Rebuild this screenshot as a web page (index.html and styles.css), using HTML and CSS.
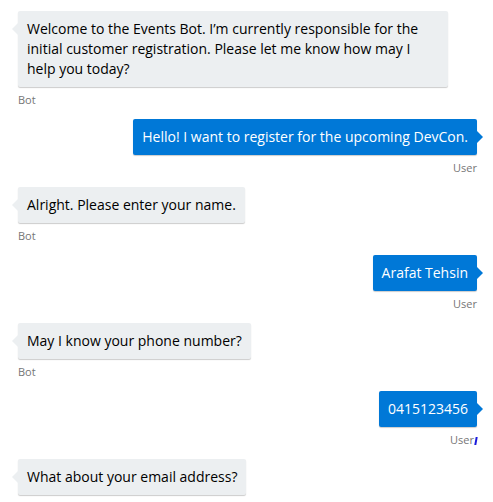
FILE: index.html
```html
<!DOCTYPE html>
<html>
<head>
<meta charset="utf-8">
<link rel="stylesheet" href="styles.css">
</head>
<body>
<div class="chat">
  <div class="msg bot">
    <div class="bubble">Welcome to the Events Bot. I’m currently responsible for the initial customer registration. Please let me know how may I help you today?</div>
    <div class="label">Bot</div>
  </div>
  <div class="msg user">
    <div class="bubble">Hello! I want to register for the upcoming DevCon.</div>
    <div class="label">User</div>
  </div>
  <div class="msg bot">
    <div class="bubble">Alright. Please enter your name.</div>
    <div class="label">Bot</div>
  </div>
  <div class="msg user">
    <div class="bubble">Arafat Tehsin</div>
    <div class="label">User</div>
  </div>
  <div class="msg bot">
    <div class="bubble">May I know your phone number?</div>
    <div class="label">Bot</div>
  </div>
  <div class="msg user">
    <div class="bubble">0415123456</div>
    <div class="label">User<span class="caret"></span></div>
  </div>
  <div class="msg bot">
    <div class="bubble">What about your email address?</div>
  </div>
</div>
</body>
</html>
```
FILE: styles.css
```css
html, body {
  margin: 0;
  padding: 0;
  background: #ffffff;
  overflow: hidden;
}
.chat {
  display: flex;
  flex-direction: column;
  padding: 11px 16px 0 18px;
  font-family: "Open Sans", "Noto Sans", sans-serif;
}
.msg {
  display: flex;
  flex-direction: column;
  margin-bottom: 12px;
}
.msg.bot { align-items: flex-start; }
.msg.user { align-items: flex-end; }
.bubble {
  position: relative;
  font-size: 14px;
  line-height: 20px;
  padding: 8px 9px;
  border-radius: 2px;
  box-shadow: 0 1px 1px rgba(0, 0, 0, 0.2);
  max-width: 412px;
}
.bot .bubble {
  background: #eceff1;
  color: #000000;
}
.user .bubble {
  background: #0078d7;
  color: #ffffff;
}
.bubble::before {
  content: "";
  position: absolute;
  top: 12px;
  width: 0;
  height: 0;
  border-top: 6px solid transparent;
  border-bottom: 6px solid transparent;
}
.bot .bubble::before {
  left: -6px;
  border-right: 6px solid #eceff1;
}
.user .bubble::before {
  right: -6px;
  border-left: 6px solid #0078d7;
}
.label {
  font-size: 11px;
  line-height: 15px;
  padding-top: 5px;
  color: #767676;
  font-family: "Open Sans", "Noto Sans", sans-serif;
}
.caret {
  display: inline-block;
  width: 2px;
  height: 8px;
  background: #1a1adc;
  margin-left: 1px;
  transform: skewX(-10deg);
  vertical-align: -1px;
}
```
